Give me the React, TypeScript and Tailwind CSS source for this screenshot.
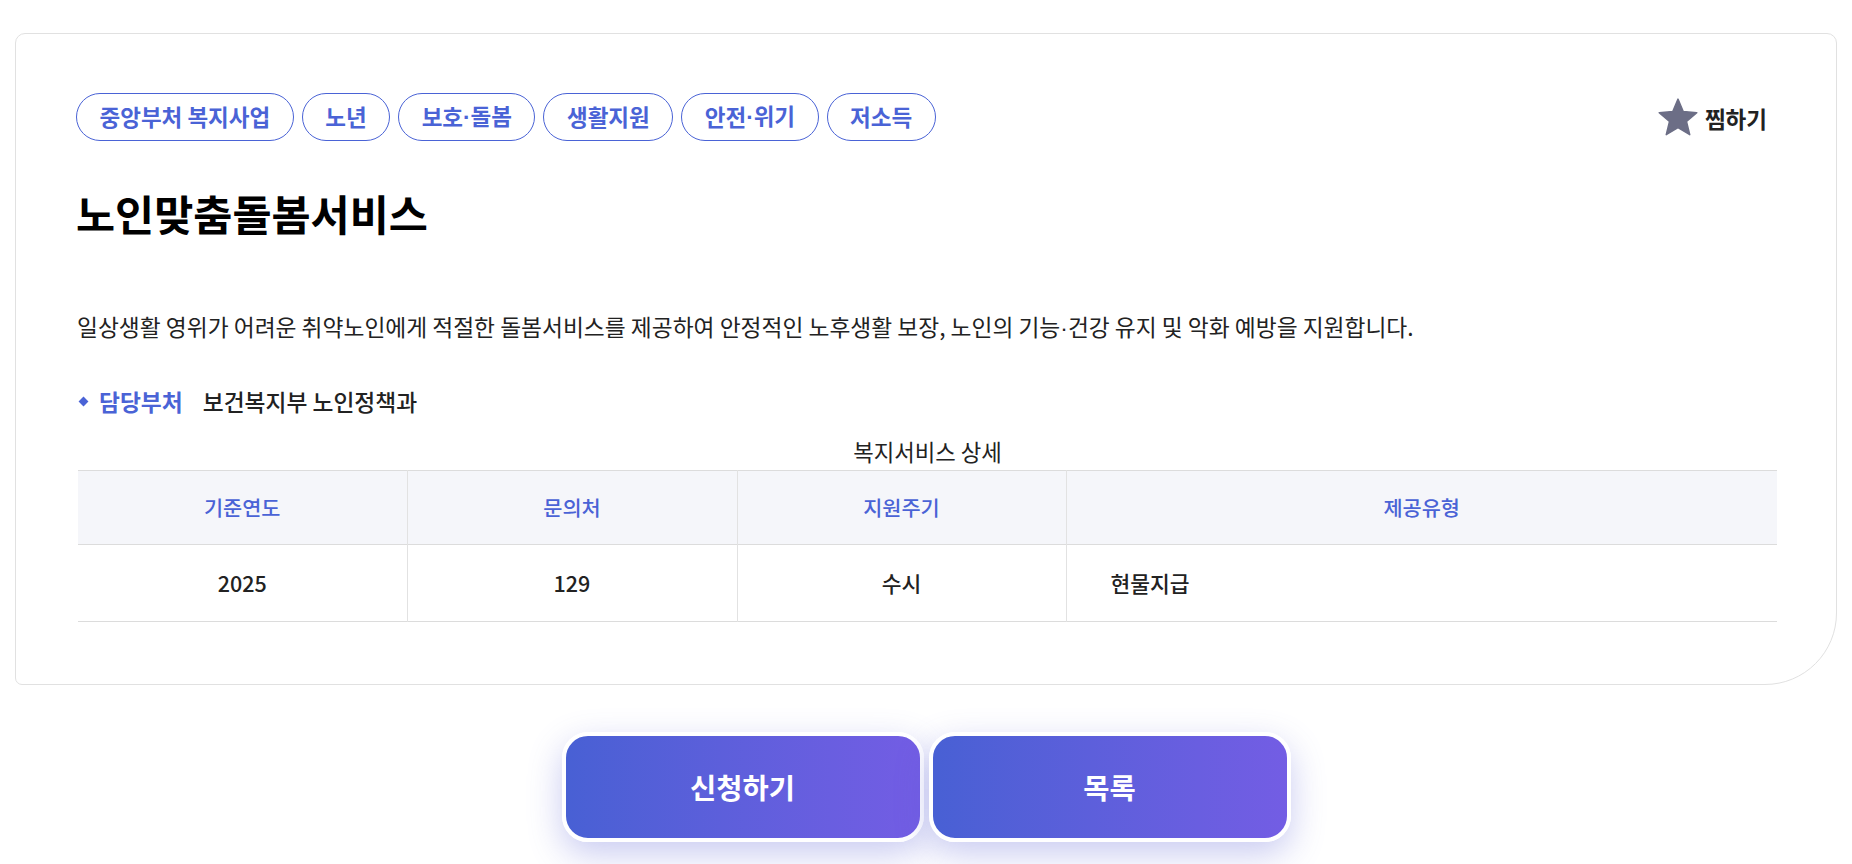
import { useState } from "react";

const tags = ["중앙부처 복지사업", "노년", "보호·돌봄", "생활지원", "안전·위기", "저소득"];

const columns = [
  { label: "기준연도", value: "2025" },
  { label: "문의처", value: "129" },
  { label: "지원주기", value: "수시" },
  { label: "제공유형", value: "현물지급" },
];

// CJK fonts draw "·" full width; the reference uses a narrow one
function Dotted({ text }: { text: string }) {
  const parts = text.split("·");
  return (
    <>
      {parts.map((p, i) => (
        <span key={i}>
          {i > 0 && <span className="font-['Liberation_Sans']">·</span>}
          {p}
        </span>
      ))}
    </>
  );
}

function StarIcon() {
  return (
    <svg width="40" height="38" viewBox="1 0.6 22 21" aria-hidden="true">
      <polygon
        points="12,1.2 14.9,8.1 22.4,8.7 16.7,13.6 18.5,20.9 12,17 5.5,20.9 7.3,13.6 1.6,8.7 9.1,8.1"
        fill="#6c6e86"
        stroke="#6c6e86"
        strokeWidth="0.8"
        strokeLinejoin="round"
      />
    </svg>
  );
}

export default function App() {
  const [liked, setLiked] = useState(false);

  return (
    <div
      className="min-h-screen bg-white px-[15px] pt-[33px] text-[#222]"
      style={{ fontFamily: '"Noto Sans CJK KR", "Noto Sans", sans-serif' }}
    >
      {/* Detail card */}
      <div className="rounded-t-[10px] rounded-bl-[7px] rounded-br-[72px] border border-[#e1e1e1] bg-white pl-[62px] pr-[59px] pt-[59px] pb-[62px]">
        <div className="flex items-center justify-between">
          <div className="-ml-[2px] flex gap-[8px]">
            {tags.map((t) => (
              <span
                key={t}
                className="flex h-[48px] items-center rounded-full border border-[#4a63d6] px-[22.5px] text-[22.5px] font-semibold text-[#4a63d6]"
              >
                <Dotted text={t} />
              </span>
            ))}
          </div>
          <button
            onClick={() => setLiked((v) => !v)}
            className="mr-[10px] flex items-center gap-[7px] text-[22.5px] font-semibold text-[#222]"
          >
            <StarIcon />
            <span className="mt-[4px]">{liked ? "찜취소" : "찜하기"}</span>
          </button>
        </div>

        <h1 className="-ml-[2px] mt-[46px] text-[42.5px] font-bold leading-[52px] text-black">
          노인맞춤돌봄서비스
        </h1>

        <p className="-ml-[1px] mt-[72px] text-[22.75px] leading-[31px] text-[#222]">
          <Dotted text="일상생활 영위가 어려운 취약노인에게 적절한 돌봄서비스를 제공하여 안정적인 노후생활 보장, 노인의 기능·건강 유지 및 악화 예방을 지원합니다." />
        </p>

        <div className="mt-[42px] flex items-center leading-[31px]">
          <span className="ml-[2px] h-[7px] w-[7px] rotate-45 bg-[#4a63d6]" />
          <span className="ml-[12px] text-[22.75px] font-bold text-[#4a63d6]">담당부처</span>
          <span className="ml-[20px] text-[22.75px] font-medium text-[#222]">보건복지부 노인정책과</span>
        </div>

        <table className="mt-[19px] w-full table-fixed border-collapse text-[20.8px]">
          <caption className="pb-[3px] text-center text-[22.3px] leading-[31px] text-[#222]">복지서비스 상세</caption>
          <colgroup>
            <col className="w-[329px]" />
            <col className="w-[330px]" />
            <col className="w-[329px]" />
            <col />
          </colgroup>
          <thead>
            <tr className="h-[74px] border-y border-[#dcdcdc] bg-[#f5f6fa]">
              {columns.map((c, i) => (
                <th
                  key={c.label}
                  className={`font-medium text-[#4a63d6] ${i < columns.length - 1 ? "border-r border-[#e2e2e2]" : ""}`}
                >
                  {c.label}
                </th>
              ))}
            </tr>
          </thead>
          <tbody>
            <tr className="h-[77px] border-b border-[#dcdcdc] text-[21.5px]">
              {columns.map((c, i) =>
                i < columns.length - 1 ? (
                  <td key={c.label} className="border-r border-[#e2e2e2] text-center font-medium text-[#222]">
                    {c.value}
                  </td>
                ) : (
                  <td key={c.label} className="pl-[44px] text-left font-medium text-[#222]">
                    {c.value}
                  </td>
                )
              )}
            </tr>
          </tbody>
        </table>
      </div>

      {/* Actions */}
      <div className="mt-[47px] flex justify-center gap-[5px]">
        <button className="flex h-[110px] w-[362px] items-center justify-center rounded-[26px] border-4 border-white bg-linear-to-r from-[#4860d4] to-[#735de4] text-[28.5px] font-bold text-white shadow-[0_12px_34px_rgba(88,92,210,0.32)]">
          신청하기
        </button>
        <button className="flex h-[110px] w-[362px] items-center justify-center rounded-[26px] border-4 border-white bg-linear-to-r from-[#4860d4] to-[#735de4] text-[28.5px] font-bold text-white shadow-[0_12px_34px_rgba(88,92,210,0.32)]">
          목록
        </button>
      </div>
    </div>
  );
}
